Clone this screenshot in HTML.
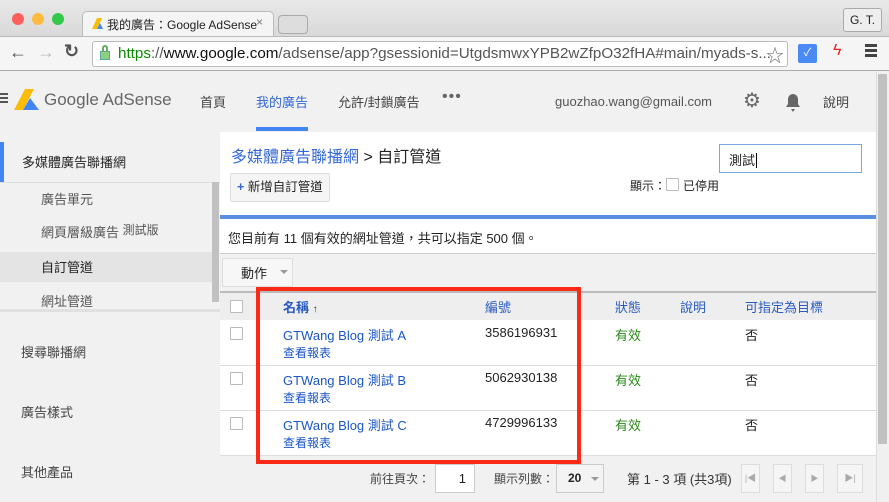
<!DOCTYPE html>
<html><head><meta charset="utf-8"><style>
*{margin:0;padding:0;box-sizing:border-box}
body{width:889px;height:502px;overflow:hidden;position:relative;font-family:"Liberation Sans","Noto Sans CJK TC",sans-serif;font-size:13px;color:#222;background:#f1f1f1}
.a{position:absolute;white-space:nowrap}
.blue{color:#1a56c8}
.cb{position:absolute;width:13px;height:13px;border:1px solid #bbb;background:#fff;border-radius:1px}
</style></head><body>
<!-- tab bar -->
<div class="a" style="left:0;top:0;width:889px;height:36px;background:linear-gradient(#e8e8e8,#d9d9d9)"></div>
<div class="a" style="left:12px;top:13px;width:12px;height:12px;border-radius:50%;background:#fc605c"></div>
<div class="a" style="left:32px;top:13px;width:12px;height:12px;border-radius:50%;background:#fdbc40"></div>
<div class="a" style="left:52px;top:13px;width:12px;height:12px;border-radius:50%;background:#34c84a"></div>
<div class="a" style="left:82px;top:11px;width:192px;height:26px;background:#f4f4f4;border:1px solid #bbb;border-bottom:none;border-radius:5px 5px 0 0"></div>
<svg class="a" style="left:91px;top:17px" width="13" height="13"><path d="M1 12L6 1h5L6 12z" fill="#fbbc04"/><path d="M6 12l3-6 3 6z" fill="#4285f4"/></svg>
<div class="a" style="left:107px;top:16px;font-size:12px">我的廣告：Google AdSense</div>
<div class="a" style="left:256px;top:15px;font-size:12px;color:#777">×</div>
<div class="a" style="left:278px;top:15px;width:30px;height:19px;background:#ddd;border:1px solid #aaa;border-radius:4px"></div>
<div class="a" style="left:843px;top:8px;width:39px;height:24px;border:1px solid #aaa;border-radius:3px;background:#eee;font-size:12px;text-align:center;line-height:22px">G. T.</div>
<!-- toolbar -->
<div class="a" style="left:0;top:36px;width:889px;height:35px;background:#f5f5f5;border-top:1px solid #bbb;border-bottom:1px solid #aaa"></div>
<div class="a" style="left:9px;top:42px;font-size:18px;color:#555">←</div>
<div class="a" style="left:37px;top:42px;font-size:18px;color:#bbb">→</div>
<div class="a" style="left:64px;top:41px;font-size:18px;color:#555;font-weight:bold">↻</div>
<div class="a" style="left:92px;top:41px;width:696px;height:26px;background:#fff;border:1px solid #bbb;border-radius:3px"></div>
<div class="a" style="left:100px;top:51px;width:10px;height:9px;background:#8ed07f;border:1px solid #5a9;"></div>
<div class="a" style="left:102px;top:45px;width:6px;height:7px;border:2px solid #6a6;border-bottom:none;border-radius:3px 3px 0 0"></div>
<div class="a" style="left:118px;top:45px;font-size:15.2px;color:#555"><span style="color:#0a8a00">https</span>://<span style="color:#111">www.google.com</span>/adsense/app?gsessionid=UtgdsmwxYPB2wZfpO32fHA#main/myads-s...</div>
<div class="a" style="left:766px;top:42px;font-size:18px;color:#777">☆</div>
<div class="a" style="left:798px;top:44px;width:19px;height:19px;background:#4a8af4;border-radius:2px;color:#fff;font-size:11px;text-align:center;line-height:19px">✓</div>
<div class="a" style="left:833px;top:42px;font-size:16px;color:#e22">ϟ</div>
<div class="a" style="left:865px;top:44px;width:12px;height:3px;background:#444;box-shadow:0 5px 0 #444,0 10px 0 #444"></div>
<!-- page scrollbar -->
<div class="a" style="left:876px;top:72px;width:13px;height:430px;background:#f0f0f0;border-left:1px solid #ddd"></div>
<div class="a" style="left:878px;top:74px;width:9px;height:370px;background:#c1c1c1;border-radius:1px"></div>
<!-- header -->
<div class="a" style="left:0;top:93px;width:8px;height:2px;background:#555;box-shadow:0 4px 0 #555,0 8px 0 #555"></div>
<svg class="a" style="left:13px;top:88px" width="28" height="23"><path d="M1 22L12 1h9L10 22z" fill="#fbbc04"/><path d="M10 22l7-12 9 12z" fill="#4285f4"/></svg>
<div class="a" style="left:44px;top:90px;font-size:17px;color:#666">Google AdSense</div>
<div class="a" style="left:200px;top:92px;color:#444">首頁</div>
<div class="a" style="left:256px;top:92px;color:#3367d6">我的廣告</div>
<div class="a" style="left:256px;top:127px;width:52px;height:4px;background:#4285f4"></div>
<div class="a" style="left:338px;top:92px;color:#444">允許/封鎖廣告</div>
<div class="a" style="left:442px;top:88px;font-size:16px;color:#666;letter-spacing:1px">•••</div>
<div class="a" style="left:555px;top:94px;color:#555">guozhao.wang@gmail.com</div>
<div class="a" style="left:743px;top:88px;font-size:20px;color:#666">⚙</div>
<svg class="a" style="left:783px;top:91px" width="20" height="22"><path d="M3 16h14l-2-3V8a5 5 0 0 0-10 0v5z M8 18h4l-2 3z" fill="#666"/></svg>
<div class="a" style="left:823px;top:92px;color:#444">說明</div>
<!-- sidebar -->
<div class="a" style="left:0;top:142px;width:4px;height:40px;background:#4285f4"></div>
<div class="a" style="left:22px;top:152px">多媒體廣告聯播網</div>
<div class="a" style="left:0;top:182px;width:220px;height:1px;background:#ddd"></div>
<div class="a" style="left:0;top:252px;width:212px;height:30px;background:#e4e4e4"></div>
<div class="a" style="left:41px;top:189px;color:#555">廣告單元</div>
<div class="a" style="left:41px;top:222px;color:#555">網頁層級廣告 <span style="font-size:12px;position:relative;top:-3px">測試版</span></div>
<div class="a" style="left:41px;top:257px;color:#222">自訂管道</div>
<div class="a" style="left:41px;top:291px;color:#555">網址管道</div>
<div class="a" style="left:212px;top:182px;width:7px;height:120px;background:#c1c1c1"></div>
<div class="a" style="left:0;top:309px;width:220px;height:3px;background:#e0e0e0"></div>
<div class="a" style="left:21px;top:342px;color:#444">搜尋聯播網</div>
<div class="a" style="left:21px;top:402px;color:#444">廣告樣式</div>
<div class="a" style="left:21px;top:462px;color:#444">其他產品</div>
<!-- main -->
<div class="a" style="left:220px;top:132px;width:656px;height:370px;background:#fff"></div>
<div class="a" style="left:231px;top:143px;font-size:16px"><span style="color:#3367d6">多媒體廣告聯播網</span> &gt; 自訂管道</div>
<div class="a" style="left:230px;top:173px;width:100px;height:29px;background:#f5f5f5;border:1px solid #ddd;border-radius:2px;font-size:12.5px;line-height:27px;padding-left:6px"><b style="color:#3367d6">+</b> 新增自訂管道</div>
<div class="a" style="left:719px;top:144px;width:143px;height:29px;border:1px solid #7aa7ea"></div>
<div class="a" style="left:729px;top:150px;">測試<span style="border-left:1px solid #000;margin-left:1px"></span></div>
<div class="a" style="left:630px;top:177px;font-size:12px">顯示：</div>
<div class="cb" style="left:666px;top:178px"></div>
<div class="a" style="left:683px;top:177px;font-size:12px">已停用</div>
<div class="a" style="left:220px;top:215px;width:656px;height:4px;background:#5b8ee0"></div>
<div class="a" style="left:228px;top:228px">您目前有 11 個有效的網址管道，共可以指定 500 個。</div>
<div class="a" style="left:220px;top:253px;width:656px;height:38px;background:#f1f1f1;border-top:1px solid #ccc"></div>
<div class="a" style="left:222px;top:258px;width:71px;height:29px;background:#f7f7f7;border:1px solid #ddd;border-radius:2px"></div>
<div class="a" style="left:241px;top:263px">動作</div>
<div class="a" style="left:280px;top:270px;border:4px solid transparent;border-top-color:#999"></div>
<div class="a" style="left:220px;top:291px;width:656px;height:29px;background:#eeeeee;border-top:2px solid #bbb"></div>
<div class="cb" style="left:230px;top:300px"></div>
<div class="a blue" style="left:283px;top:297px;font-weight:bold;color:#2a5ac0">名稱 <span style="color:#333;font-size:10px">↑</span></div>
<div class="a blue" style="left:485px;top:297px;color:#2a5ac0">編號</div>
<div class="a blue" style="left:615px;top:297px;color:#2a5ac0">狀態</div>
<div class="a blue" style="left:680px;top:297px;color:#2a5ac0">說明</div>
<div class="a blue" style="left:745px;top:297px;color:#2a5ac0">可指定為目標</div>
<!-- rows -->
<div class="a" style="left:220px;top:365px;width:656px;height:1px;background:#ddd"></div>
<div class="a" style="left:220px;top:410px;width:656px;height:1px;background:#ddd"></div>
<div class="a" style="left:220px;top:455px;width:656px;height:47px;background:#f1f1f1;border-top:1px solid #ddd"></div>

<div class="cb" style="left:230px;top:327px"></div>
<div class="a blue" style="left:283px;top:325px">GTWang Blog 測試 A</div>
<div class="a blue" style="left:283px;top:344px;font-size:12px">查看報表</div>
<div class="a" style="left:485px;top:325px">3586196931</div>
<div class="a" style="left:615px;top:325px;color:#2a8a1a">有效</div>
<div class="a" style="left:745px;top:325px">否</div>

<div class="cb" style="left:230px;top:372px"></div>
<div class="a blue" style="left:283px;top:370px">GTWang Blog 測試 B</div>
<div class="a blue" style="left:283px;top:389px;font-size:12px">查看報表</div>
<div class="a" style="left:485px;top:370px">5062930138</div>
<div class="a" style="left:615px;top:370px;color:#2a8a1a">有效</div>
<div class="a" style="left:745px;top:370px">否</div>

<div class="cb" style="left:230px;top:417px"></div>
<div class="a blue" style="left:283px;top:415px">GTWang Blog 測試 C</div>
<div class="a blue" style="left:283px;top:434px;font-size:12px">查看報表</div>
<div class="a" style="left:485px;top:415px">4729996133</div>
<div class="a" style="left:615px;top:415px;color:#2a8a1a">有效</div>
<div class="a" style="left:745px;top:415px">否</div>
<!-- footer -->
<div class="a" style="left:370px;top:470px;font-size:12px;color:#444">前往頁次：</div>
<div class="a" style="left:435px;top:464px;width:40px;height:29px;background:#fff;border:1px solid #ccc;text-align:right;padding-right:8px;line-height:27px">1</div>
<div class="a" style="left:494px;top:470px;font-size:12px;color:#444">顯示列數：</div>
<div class="a" style="left:556px;top:464px;width:48px;height:29px;background:#f3f3f3;border:1px solid #ccc;line-height:27px;padding-left:11px;font-weight:bold;font-size:12px">20</div>
<div class="a" style="left:591px;top:477px;border:4px solid transparent;border-top-color:#999"></div>
<div class="a" style="left:627px;top:469px;color:#333">第 1 - 3 項 (共3項)</div>
<div class="a" style="left:741px;top:464px;width:19px;height:29px;border:1px solid #ddd;background:#f5f5f5;color:#aaa;font-size:9px;text-align:center;line-height:27px">|◀</div>
<div class="a" style="left:773px;top:464px;width:19px;height:29px;border:1px solid #ddd;background:#f5f5f5;color:#aaa;font-size:8px;text-align:center;line-height:27px">◀</div>
<div class="a" style="left:805px;top:464px;width:19px;height:29px;border:1px solid #ddd;background:#f5f5f5;color:#aaa;font-size:8px;text-align:center;line-height:27px">▶</div>
<div class="a" style="left:837px;top:464px;width:26px;height:29px;border:1px solid #ddd;background:#f5f5f5;color:#aaa;font-size:9px;text-align:center;line-height:27px">▶|</div>
<!-- red box -->
<div class="a" style="left:256px;top:287px;width:325px;height:177px;border:4px solid #fa2a16"></div>
</body></html>
